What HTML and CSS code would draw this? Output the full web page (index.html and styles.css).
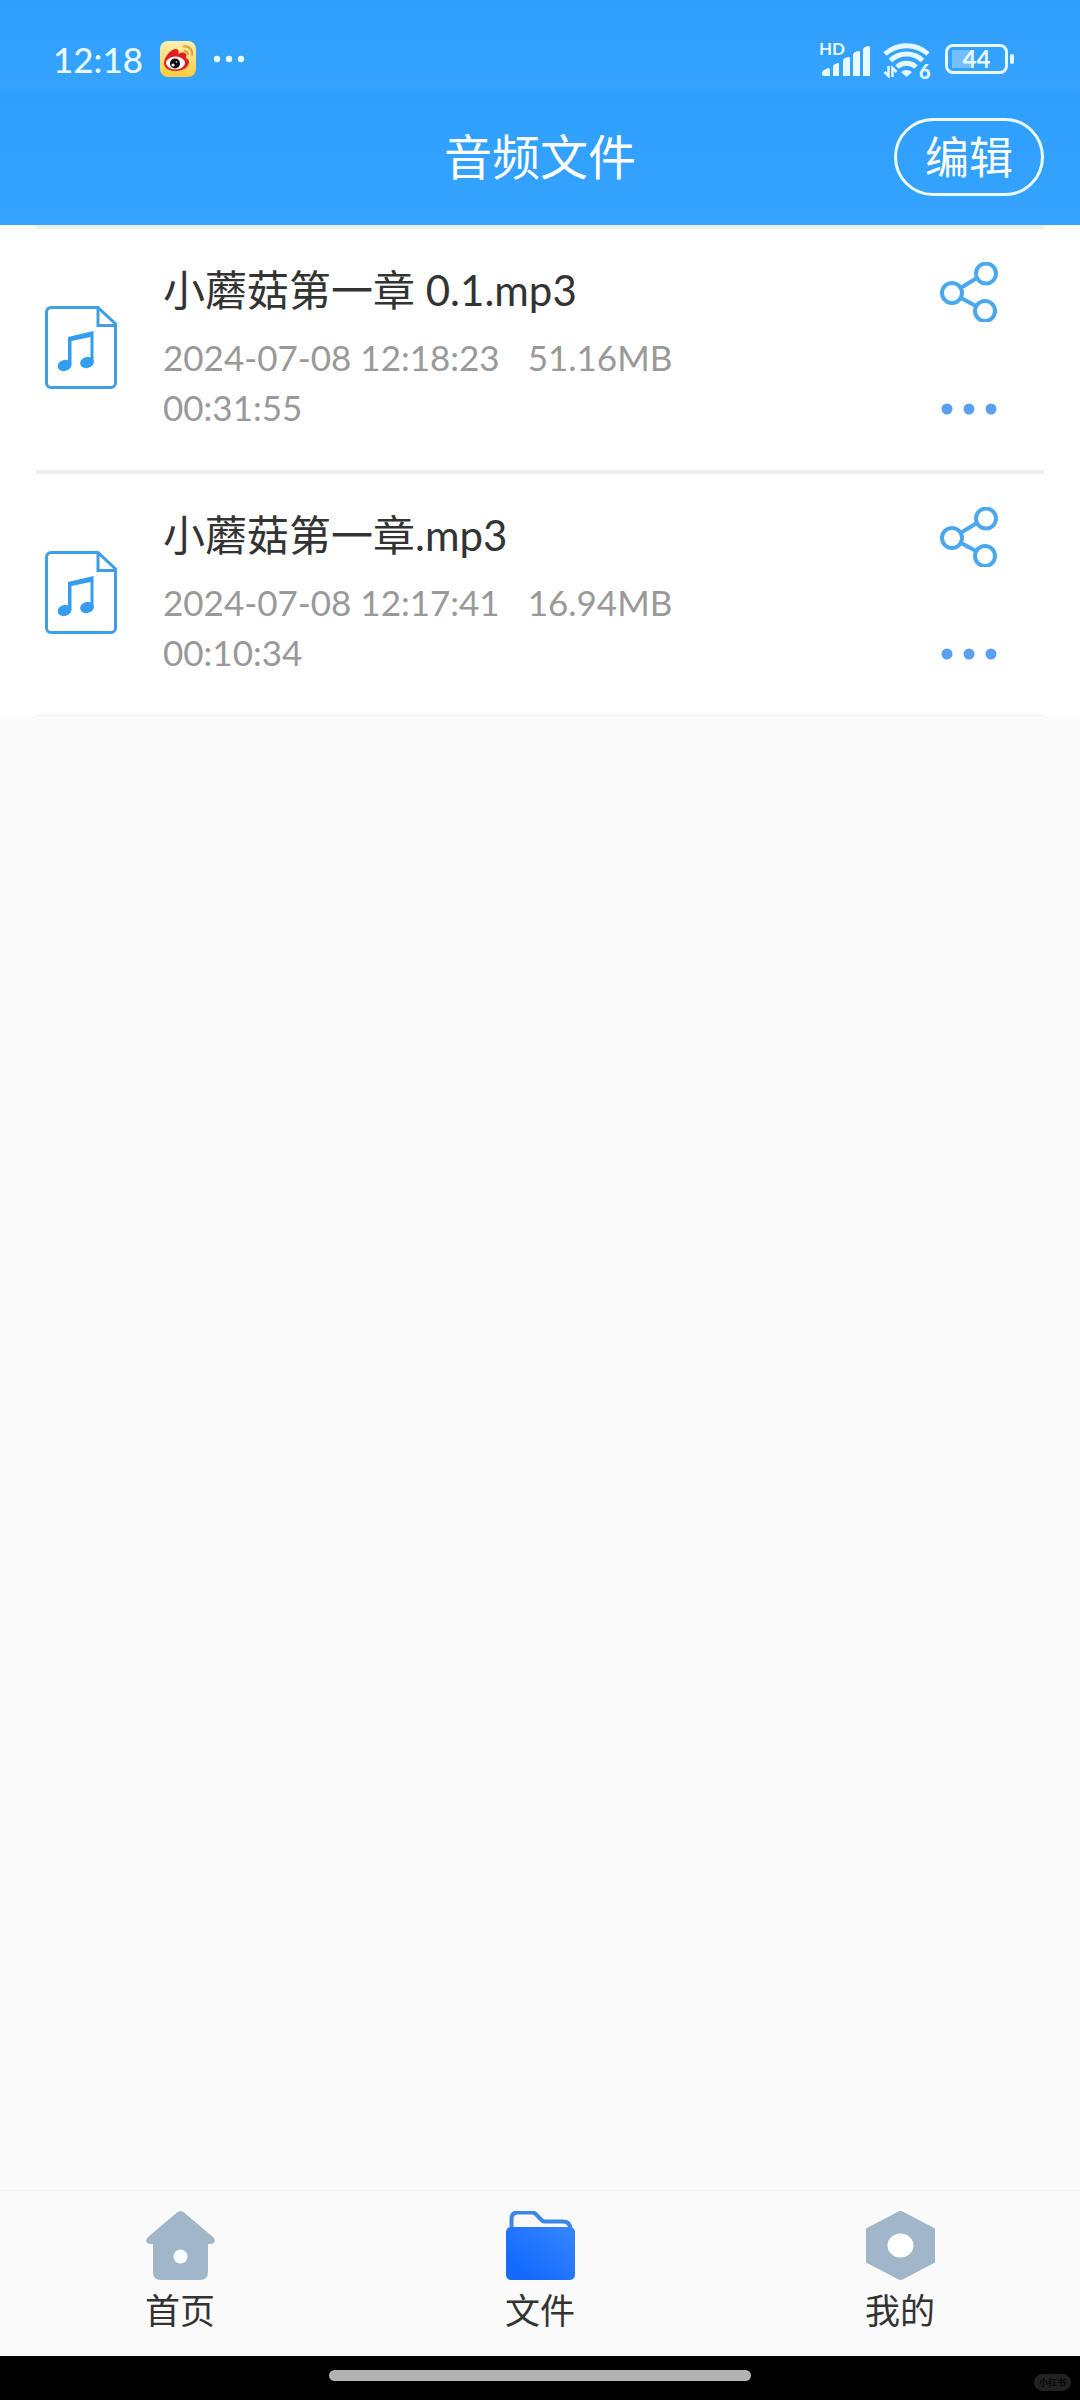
FILE: index.html
```html
<!DOCTYPE html>
<html lang="zh-CN">
<head>
  <meta charset="UTF-8" />
  <meta name="viewport" content="width=device-width, initial-scale=1" />
  <title>音频文件</title>
  <link rel="stylesheet" href="styles.css">
</head>
<body>
  <div class="status-bar">
    <span class="time">12:18</span>
    <svg class="app-icon" viewBox="0 0 36 36" aria-hidden="true">
      <defs>
        <linearGradient id="weiboBg" x1="0" y1="0" x2="0" y2="1">
          <stop offset="0" stop-color="#fdf0b4" />
          <stop offset="1" stop-color="#fdcb3c" />
        </linearGradient>
      </defs>
      <rect width="36" height="36" rx="8" fill="url(#weiboBg)" />
      <path d="M4 22C4 16 11 8 16 8c3 0 3 3 2 5 3-2 7-2 8 0 1 1 0 3 0 4 2 1 3 2 3 4 0 5-6 9-13 9S4 27 4 22z" fill="#e01f20" />
      <ellipse cx="15.500" cy="22" rx="9.500" ry="6.500" fill="#fff" />
      <circle cx="15" cy="22.500" r="5" fill="#0c0c0c" />
      <circle cx="13" cy="24" r="1.600" fill="#fff" />
      <circle cx="16.500" cy="21" r=".8" fill="#fff" />
      <path d="M23 5.500c6-1 10 3 9 9M24 10c3 0 4 2 4 4" fill="none" stroke="#e9a23b" stroke-width="2.200" />
    </svg>
    <svg class="notif-dots" viewBox="0 0 32 8" aria-hidden="true">
      <circle cx="4" cy="4" r="3.200" /><circle cx="16" cy="4" r="3.200" /><circle cx="28" cy="4" r="3.200" />
    </svg>

    <div class="status-right">
      <div class="signal">
        <span class="hd">HD</span>
        <svg viewBox="0 0 52 36" aria-hidden="true">
          <path d="M3 32q0-2 2-3l4-2q2 0 2 2v6H5q-2 0-2-2zM14 26q0-2 2-3l3-1q1 0 1 1v12h-6zM24 20q0-2 2-3l3-1q2 0 2 1v18h-7zM34 14q0-2 2-3l3-1q2 0 2 1v24h-7zM44 9q0-2 2-3l3-1q2 0 2 1v29h-7z" />
        </svg>
      </div>
      <svg class="wifi" viewBox="0 0 48 38" aria-hidden="true">
        <g fill="none" stroke="#e8f8ff" stroke-width="5">
          <path d="M2 14a32 32 0 0 1 43 0" />
          <path d="M7.500 20.500a23 23 0 0 1 32 0" />
          <path d="M14 27a14 14 0 0 1 19 0" />
        </g>
        <path d="M18 32q5.500-4 11 0l-5.500 5z" />
        <path d="M5.500 26v10l-4-4M9.500 37v-9l4 4" fill="none" stroke="#e8f8ff" stroke-width="2.500" />
      </svg>
      <span class="wifi-gen">6</span>
      <div class="battery"><span>44</span></div>
    </div>
  </div>

  <header class="header">
    <h1>音频文件</h1>
    <button class="edit-btn" type="button">编辑</button>
  </header>

  <main>
    <ul class="file-list">
      <li class="file">
        <svg class="file-icon" viewBox="0 0 72 84" aria-hidden="true">
          <path d="M52 1.500H6A4.500 4.500 0 0 0 1.500 6v71A4.500 4.500 0 0 0 6 81.500h60a4.500 4.500 0 0 0 4.500-4.500V18L53 1.500V19.500h17.500" />
          <g class="note">
            <path d="M23 31l25.500-6v31h-3V31L26.500 35v24H23z" />
            <ellipse cx="19.500" cy="59.500" rx="7" ry="5.500" transform="rotate(-15 19.500 59.500)" />
            <ellipse cx="42" cy="56.500" rx="7" ry="5.500" transform="rotate(-15 42 56.500)" />
          </g>
        </svg>
        <div class="info">
          <h2>小蘑菇第一章 0.1.mp3</h2>
          <p><span>2024-07-08 12:18:23</span><span>51.16MB</span></p>
          <p>00:31:55</p>
        </div>
        <div class="actions">
          <button class="share" type="button" aria-label="分享">
            <svg viewBox="0 0 58 60" aria-hidden="true">
              <circle cx="46" cy="11.500" r="10" /><circle cx="12" cy="31" r="10" /><circle cx="45" cy="49" r="10" />
              <path d="M20.500 26L37 16M21 36l15 8" />
            </svg>
          </button>
          <button class="more" type="button" aria-label="更多">
            <svg viewBox="0 0 58 12" aria-hidden="true">
              <circle cx="7" cy="6" r="5.500" /><circle cx="29" cy="6" r="5.500" /><circle cx="51" cy="6" r="5.500" />
            </svg>
          </button>
        </div>
      </li>
      <li class="file">
        <svg class="file-icon" viewBox="0 0 72 84" aria-hidden="true">
          <path d="M52 1.500H6A4.500 4.500 0 0 0 1.500 6v71A4.500 4.500 0 0 0 6 81.500h60a4.500 4.500 0 0 0 4.500-4.500V18L53 1.500V19.500h17.500" />
          <g class="note">
            <path d="M23 31l25.500-6v31h-3V31L26.500 35v24H23z" />
            <ellipse cx="19.500" cy="59.500" rx="7" ry="5.500" transform="rotate(-15 19.500 59.500)" />
            <ellipse cx="42" cy="56.500" rx="7" ry="5.500" transform="rotate(-15 42 56.500)" />
          </g>
        </svg>
        <div class="info">
          <h2>小蘑菇第一章.mp3</h2>
          <p><span>2024-07-08 12:17:41</span><span>16.94MB</span></p>
          <p>00:10:34</p>
        </div>
        <div class="actions">
          <button class="share" type="button" aria-label="分享">
            <svg viewBox="0 0 58 60" aria-hidden="true">
              <circle cx="46" cy="11.500" r="10" /><circle cx="12" cy="31" r="10" /><circle cx="45" cy="49" r="10" />
              <path d="M20.500 26L37 16M21 36l15 8" />
            </svg>
          </button>
          <button class="more" type="button" aria-label="更多">
            <svg viewBox="0 0 58 12" aria-hidden="true">
              <circle cx="7" cy="6" r="5.500" /><circle cx="29" cy="6" r="5.500" /><circle cx="51" cy="6" r="5.500" />
            </svg>
          </button>
        </div>
      </li>
    </ul>
  </main>

  <nav class="tab-bar">
    <a href="#home">
      <svg viewBox="0 0 69 69" aria-hidden="true">
        <path d="M31 1.500q3.500-3 7 0L67 26q3 3 1 5.500Q67 33 62 33v28q0 8-8 8H15q-8 0-8-8V33Q2 33 1 31.500-1 29 2 26z" fill="#a1b6c9" />
        <circle cx="34.500" cy="45.500" r="7" fill="#fafdff" />
      </svg>
      <span>首页</span>
    </a>
    <a href="#files" aria-current="page">
      <svg viewBox="0 0 69 69" aria-hidden="true">
        <defs>
          <linearGradient id="folderBg" x1="0" y1="1" x2="1" y2="0">
            <stop offset=".2" stop-color="#146aff" />
            <stop offset="1" stop-color="#3787fc" />
          </linearGradient>
        </defs>
        <path d="M5.500 18V8q0-6.500 6.500-6.500h14q3 0 5 3l5 5q1 1 3 1h18q7 0 7.500 7.500" fill="#fafafa" stroke="#3b86e6" stroke-width="4" />
        <rect y="16" width="69" height="53" rx="5" fill="url(#folderBg)" />
      </svg>
      <span>文件</span>
    </a>
    <a href="#mine">
      <svg viewBox="0 0 69 69" aria-hidden="true">
        <path d="M31.500 1q3-2 6 0L69 17.500v34L37.500 68q-3 2-6 0L0 51.500v-34z" fill="#a1b6c9" />
        <ellipse cx="34.500" cy="34.500" rx="13" ry="12" fill="#fff" />
      </svg>
      <span>我的</span>
    </a>
  </nav>

  <footer class="system-bar">
    <div class="home-indicator"></div>
    <span class="watermark">小红书</span>
  </footer>
</body>
</html>
```

FILE: styles.css
```css
* { box-sizing: border-box; }
body {
  margin: 0;
  min-height: 100vh;
  display: flex;
  flex-direction: column;
  background: #fafafa;
  color: #333;
  font-family: Lato, "Noto Sans CJK SC", sans-serif;
}
h1, h2, p { margin: 0; font-weight: 400; }
svg { display: block; }
button {
  padding: 0;
  border: 0;
  background: none;
  color: inherit;
  font-family: inherit;
  cursor: pointer;
}

/* status bar */
.status-bar {
  height: 90px;
  padding: 28px 72px 0 53px;
  display: flex;
  align-items: flex-start;
  background: linear-gradient(#2e9fff, #36a3ff);
  color: #e8f8ff;
  fill: #e8f8ff;
}
.time {
  width: 107px;
  font-size: 35px;
  font-weight: 500;
  line-height: 62px;
}
.app-icon { width: 36px; height: 36px; margin-top: 13px; }
.notif-dots { width: 32px; height: 8px; margin: 27px 0 0 17px; }
.status-right {
  margin-left: auto;
  display: flex;
  align-items: center;
  height: 62px;
}
.signal { position: relative; margin-right: 12px; }
.signal svg { width: 52px; height: 36px; }
.hd {
  position: absolute;
  top: 0;
  left: 0;
  font-size: 17px;
  font-weight: 700;
  line-height: 16px;
}
.wifi { width: 48px; height: 38px; }
.wifi-gen {
  align-self: flex-end;
  width: 12px;
  margin: 0 14px 0 -12px;
  font-size: 20px;
  font-weight: 900;
  line-height: 38px;
}
.battery {
  position: relative;
  width: 63px;
  height: 30px;
  border: 3px solid #e8f8ff;
  border-radius: 8px;
  background: linear-gradient(90deg, #74beff 19px, transparent 19px) 4px 3px / 50px 18px no-repeat;
  font-size: 24px;
  font-weight: 700;
  line-height: 24px;
  text-align: center;
}
.battery::after {
  content: "";
  position: absolute;
  top: 7px;
  right: -9px;
  width: 4px;
  height: 10px;
  border-radius: 2px;
  background: #e8f8ff;
}

/* title bar */
.header {
  height: 135px;
  padding: 0 36px 2px;
  display: grid;
  grid-template-columns: 1fr auto 1fr;
  align-items: center;
  background: linear-gradient(#2e9fff, #36a3ff);
  color: #fff;
}
.header h1 {
  grid-column: 2;
  font-size: 48px;
  line-height: 72px;
}
.edit-btn {
  justify-self: end;
  width: 150px;
  height: 78px;
  border: 3px solid #eefaff;
  border-radius: 39px;
  font-size: 44px;
  line-height: 66px;
}

/* file list */
main { flex: 1; }
.file-list {
  margin: 0;
  padding: 0 36px;
  list-style: none;
  background: #fff;
}
.file {
  display: flex;
  padding: 31px 46px 38px 9px;
  border-bottom: 4px solid #eeefef;
}
.file:first-child { border-top: 4px solid #e8eff6; }
.file:last-child { border-bottom: 1px solid #f0f0f0; }
.file-icon {
  width: 72px;
  height: 84px;
  margin: 46px 46px 0 0;
  fill: none;
  stroke: #409fe4;
  stroke-width: 3;
}
.file-icon .note { fill: #359df0; stroke: none; }
.info { flex: 1; }
.info h2 {
  margin-bottom: 12px;
  font-size: 42px;
  line-height: 60px;
}
.info p {
  display: flex;
  gap: 28px;
  color: #999;
  font-size: 35px;
  line-height: 50px;
}
.actions {
  display: flex;
  flex-direction: column;
  justify-content: space-between;
}
.actions svg { width: 58px; }
.share { height: 64px; fill: none; stroke: #4aa8ee; stroke-width: 4; }
.more { height: 46px; fill: #5b9ff2; }

/* bottom tabs */
.tab-bar {
  display: grid;
  grid-template-columns: repeat(3, 1fr);
  border-top: 1px solid #f0f1f1;
}
.tab-bar a {
  display: flex;
  flex-direction: column;
  align-items: center;
  gap: 4px;
  padding: 20px 0;
  color: #333;
  font-size: 35px;
  line-height: 52px;
  text-decoration: none;
}
.tab-bar svg { width: 69px; height: 69px; }

.system-bar {
  position: relative;
  height: 44px;
  padding-top: 14px;
  background: #000;
}
.home-indicator {
  width: 39%;
  height: 11px;
  margin: 0 auto;
  border-radius: 6px;
  background: #b3b3b3;
}
.watermark {
  position: absolute;
  right: 9px;
  bottom: 9px;
  padding: 0 5px;
  border-radius: 9px;
  background: #222;
  color: #050505;
  font-size: 9px;
  font-weight: 700;
  line-height: 17px;
}
```
